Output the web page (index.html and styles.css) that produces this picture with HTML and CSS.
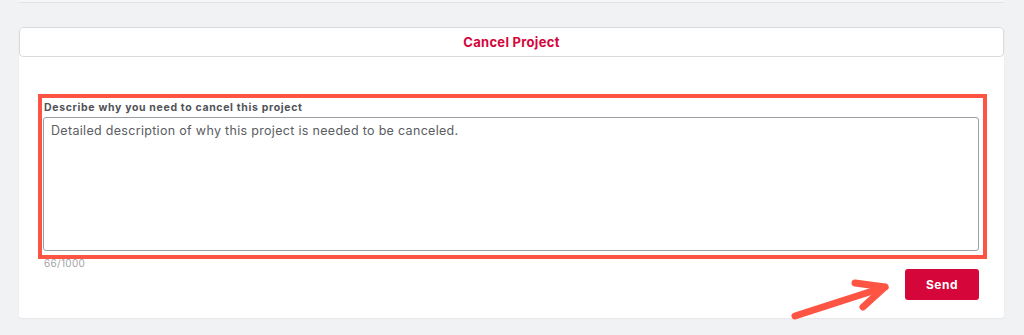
FILE: index.html
```html
<!DOCTYPE html>
<html lang="en">
<head>
<meta charset="utf-8">
<title>Cancel Project</title>
<link rel="stylesheet" href="styles.css">
</head>
<body>
<div class="top-strip"></div>
<main class="card">
  <header class="card-header">Cancel Project</header>
  <section class="card-body">
    <div class="field">
      <label class="field-label" for="reason">Describe why you need to cancel this project</label>
      <textarea id="reason" class="field-input">Detailed description of why this project is needed to be canceled.</textarea>
      <div class="counter">66/1000</div>
      <div class="highlight"></div>
    </div>
    <div class="actions">
      <button class="btn-send" type="button">Send</button>
    </div>
  </section>
  <svg class="pointer" width="110" height="50" viewBox="0 0 110 50" aria-hidden="true">
    <g fill="none" stroke="#fd5444" stroke-width="7" stroke-linecap="round" stroke-linejoin="round">
      <path d="M5 39 L95 10"/>
      <path d="M65 6 L95 10 L73 30"/>
    </g>
  </svg>
</main>
</body>
</html>
```

FILE: styles.css
```css
* { box-sizing: border-box; }
html, body { margin: 0; padding: 0; }
body {
  background: #f1f2f4;
  font-family: "Inter", "Open Sans", sans-serif;
  width: 1024px;
  height: 335px;
  overflow: hidden;
}
.top-strip {
  height: 3px;
  margin: 0 20px 0 19px;
  background: #f6f6f8;
  border-bottom: 1px solid #e2e3e6;
}
.card {
  position: relative;
  margin: 24px 20px 0 19px;
  width: 985px;
  background: #fff;
  border-radius: 3px;
  box-shadow: 0 1px 2px rgba(0,0,0,0.05);
}
.card-header {
  height: 30px;
  border: 1px solid #d9dadd;
  border-radius: 4px;
  display: flex;
  align-items: center;
  justify-content: center;
  color: #d2063c;
  font-weight: 700;
  font-size: 13px;
  letter-spacing: 0.3px;
}
.card-body {
  padding: 44px 25px 18px 24px;
}
.field {
  position: relative;
}
.field-label {
  display: block;
  font-size: 10.5px;
  font-weight: 700;
  color: #4f5257;
  line-height: 14px;
  margin: 0 0 2px 1px;
  letter-spacing: 0.66px;
}
.field-input {
  display: block;
  width: 936px;
  height: 134px;
  margin: 0;
  padding: 5px 7px;
  border: 1px solid #9a9ea5;
  border-radius: 3px;
  font-family: inherit;
  font-size: 12.5px;
  line-height: 16px;
  color: #5a5d62;
  letter-spacing: 0.31px;
  resize: none;
  outline: none;
}
.counter {
  font-size: 10px;
  color: #a3a4a7;
  line-height: 12px;
  margin: 6px 0 0 1px;
  letter-spacing: 0.3px;
}
.highlight {
  position: absolute;
  left: -5px;
  top: -7px;
  width: 949px;
  height: 165px;
  border: 4px solid #fd5444;
  pointer-events: none;
}
.actions {
  display: flex;
  justify-content: flex-end;
  margin-top: 0;
}
.btn-send {
  width: 74px;
  height: 31px;
  border: none;
  border-radius: 3px;
  background: #d4063a;
  color: #fff;
  font-family: inherit;
  font-size: 12px;
  font-weight: 700;
  letter-spacing: 0.5px;
}
.pointer {
  position: absolute;
  left: 771px;
  top: 250px;
}
```
